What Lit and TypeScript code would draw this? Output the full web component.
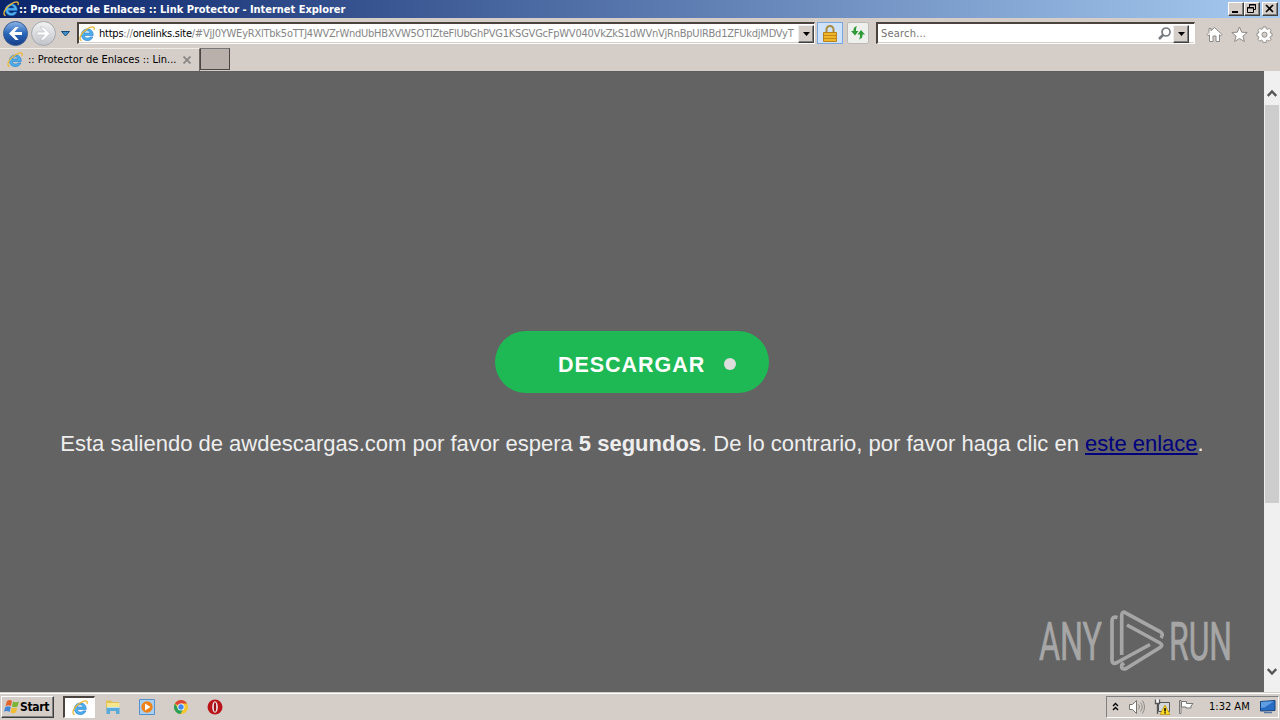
import { LitElement, html, css, svg } from "lit";
import { customElement } from "lit/decorators.js";

const ieLogo = (size: number) => html`<svg width=${size} height=${size} viewBox="0 0 16 16">
  <path d="M14.200 9.400H5.400C5.600 12.400 9.800 12.700 10.900 10.900h3C11.900 16.600 2.300 15.600 2.400 8.600 2.600 1.100 14.700.7 14.200 9.400z M5.400 7h5.600C10.700 4.200 5.900 4.100 5.400 7z" fill="#4fb0ee" fill-rule="evenodd" stroke="#1c73c4" stroke-width=".6"/>
  <path d="M2.600 14.700C-1.400 13.400 2.400 6.500 8 3.100 12.200.5 16.300-.3 15 4" fill="none" stroke="#e9b93a" stroke-width="1.300"/>
</svg>`;

const downArrow = html`<svg width="7" height="4" viewBox="0 0 7 4"><path d="M0 0h7L3.5 4z" fill="#000"/></svg>`;

const backArrow = svg`<path d="M12.5 5.5 6 12l6.500 6.500h3.200L11.500 13.500H19v-3h-7.500l4.200-5z"/>`;

@customElement("app-root")
export class AppRoot extends LitElement {
  static styles = css`
    :host { display: flex; flex-direction: column; width: 1280px; height: 720px; overflow: hidden; background: #d5cec8;
      font: 11px/14px "DejaVu Sans Condensed", "DejaVu Sans", sans-serif; color: #000; }
    * { box-sizing: border-box; }
    svg { display: block; flex: none; }
    span, p, a { white-space: pre; }
    .titlebar { flex: none; height: 18px; display: flex; align-items: center; padding: 0 2px 0 3px; background: linear-gradient(90deg, #0a246a, #a6caf0); color: #fff; }
    .title { flex: 1; font-weight: bold; letter-spacing: -0.03px; padding-top: 1px; }
    .winbtn { width: 16px; height: 14px; background: #d5cec8; border: 1px solid; border-color: #fff #404040 #404040 #fff; box-shadow: inset -1px -1px #808080; }
    .winbtn.close { margin-left: 2px; }
    .nav { flex: none; height: 30px; display: flex; align-items: flex-start; padding-top: 4px; }
    .round { margin-top: -2px; }
    .hist { margin: 9px 7px 0 3px; }
    .field { height: 22px; display: flex; align-items: center; background: #fff; border-top: 2px solid #4b433e; border-left: 2px solid #4b433e; border-bottom: 1px solid #fff; border-right: 1px solid #fff; box-shadow: inset 0 -1px #d5cec8; }
    .address { width: 738px; padding-left: 0; }
    .url { flex: 1; padding-left: 4px; color: #858585; letter-spacing: -0.23px; }
    .url b { font-weight: normal; color: #000; }
    .drop { width: 16px; height: 18px; flex: none; display: flex; align-items: center; justify-content: center; background: #d5cec8; border: 1px solid; border-color: #eee #404040 #404040 #eee; box-shadow: inset -1px -1px #808080; }
    .lock { width: 26px; height: 22px; margin-left: 2px; border: 1px solid #7ba7df; background: #cfe2fb; display: flex; align-items: center; justify-content: center; }
    .refresh { width: 22px; height: 22px; margin: 0 7px 0 4px; border: 1px solid #bdb9b4; border-radius: 2px; background: #edf0ec; display: flex; align-items: center; justify-content: center; }
    .search { width: 319px; padding-right: 5px; }
    .hint { flex: 1; color: #737373; padding-left: 3px; letter-spacing: .2px; }
    .tools { display: flex; gap: 8px; padding: 4px 0 0 11px; }
    .tabs { flex: none; height: 23px; display: flex; }
    .tab { width: 200px; display: flex; align-items: center; padding: 0 8px 0 7px; border-top: 1px solid #efebe7; border-right: 1px solid #6a6560; }
    .tabname { flex: 1; padding-left: 5px; }
    .newtab { width: 30px; height: 22px; background: #b9b0ab; border: 1px solid #4b4643; border-top-color: #777; }
    .page { flex: none; height: 621px; display: flex; }
    .content { width: 1264px; background: #636363; border-top: 1px solid #5d5d5d; display: flex; flex-direction: column; align-items: center; position: relative; }
    .button { margin-top: 259px; width: 274px; height: 62px; border-radius: 31px; background: #1eb955; display: flex; align-items: center; padding: 4px 0 0 63px; color: #fff; font: bold 21.500px/26px "Liberation Sans", Arial, sans-serif; letter-spacing: .95px; }
    .label { padding-top: 1px; }
    .dot { width: 12px; height: 12px; border-radius: 6px; background: #ddd; margin-left: 19px; }
    .notice { margin: 37px 0 0; color: #eee; font: 22px/28px "Liberation Sans", Arial, sans-serif; }
    .notice a { color: #00007f; text-decoration: underline; }
    .watermark { position: absolute; left: 1034px; top: 534px; opacity: .66; overflow: visible; }
    .watermark text { font: 53.500px Roboto, sans-serif; }
    .scroll { width: 16px; background: #f0f0f0; display: flex; flex-direction: column; align-items: center; padding: 18px 0 16px; }
    .thumb { width: 14px; height: 398px; margin: 7px 0 164px; background: #cdcdcd; }
    .taskbar { flex: none; height: 28px; border-top: 1px solid #d5cec8; box-shadow: inset 0 1px #fff; display: flex; align-items: center; padding: 1px 0 0 1px; }
    .start { width: 53px; height: 22px; display: flex; align-items: center; gap: 0; padding-left: 2px; font-weight: bold; font-size: 12px; letter-spacing: -0.3px; border: 1px solid; border-color: #fff #404040 #404040 #fff; box-shadow: inset -1px -1px #808080; }
    .active { width: 32px; height: 22px; margin-left: 9px; background: #fff; border: 1px solid #fff; border-top: 2px solid #4b433e; border-left: 2px solid #4b433e; display: flex; align-items: center; justify-content: center; }
    .apps { flex: 1; display: flex; gap: 18px; padding-left: 10px; }
    .tray { width: 173px; height: 22px; margin-right: 1px; display: flex; align-items: center; border: 1px solid; border-color: #808080 #fff #fff #808080; padding-left: 4px; gap: 8px; }
    .clock { width: 42px; margin: 0 1px 0 7px; letter-spacing: 0; }
  `;

  render() {
    return html`
      <div class="titlebar">
        ${ieLogo(16)}<span class="title">:: Protector de Enlaces :: Link Protector - Internet Explorer</span>
        <div class="winbtn"><svg width="14" height="12"><path d="M3 8h6v2H3z"/></svg></div>
        <div class="winbtn"><svg width="14" height="12" fill="none" stroke="#000"><path d="M4.500 4V1.500h6v5H8.500M4 2h7M2.500 4.500h6v5h-6zM2 5h7"/></svg></div>
        <div class="winbtn close"><svg width="14" height="12"><path d="m3 2 7 7M10 2 3 9" stroke="#000" stroke-width="1.600"/></svg></div>
      </div>
      <div class="nav">
        <svg class="round" width="58" height="28" viewBox="0 0 58 28">
          <defs>
            <linearGradient id="g" x2="0" y2="1"><stop stop-color="#8db5e8"/><stop offset=".5" stop-color="#2867ba"/><stop offset="1" stop-color="#163c86"/></linearGradient>
            <linearGradient id="h" x2="0" y2="1"><stop stop-color="#f3f3f3"/><stop offset="1" stop-color="#c1c4ca"/></linearGradient>
          </defs>
          <circle cx="15.500" cy="13.500" r="12" fill="url(#g)" stroke="#405f92"/>
          <circle cx="43.500" cy="13.500" r="12" fill="url(#h)" stroke="#a6a8ac"/>
          <g fill="#fff" transform="translate(3 1.500)">${backArrow}</g>
          <g fill="#fff" stroke="#b5b9bf" stroke-width=".6" transform="translate(56 1.500) scale(-1 1)">${backArrow}</g>
        </svg>
        <svg class="hist" width="9" height="6" viewBox="0 0 9 6"><path d="M.5.5h8l-4 4.500z" fill="#3f8fc5" stroke="#174a78"/></svg>
        <div class="field address">
          ${ieLogo(16)}<span class="url"><b>https</b>://<b>onelinks.site</b>/#VjJ0YWEyRXlTbk5oTTJ4WVZrWndUbHBXVW5OTlZteFlUbGhPVG1KSGVGcFpWV040VkZkS1dWVnVjRnBpUlRBd1ZFUkdjMDVyT</span>
          <div class="drop">${downArrow}</div>
        </div>
        <div class="lock"><svg width="14" height="17" viewBox="0 0 14 17"><path d="M3.500 8V4.500a3.500 3.500 0 0 1 7 0V8" fill="none" stroke="#a98b3e" stroke-width="2"/><path d="M.5 7.500h13v9H.5z" fill="#efb62c" stroke="#b8821a"/><path d="M1 10.500h12M1 13.500h12" stroke="#c48a17"/></svg></div>
        <div class="refresh"><svg width="14" height="14" viewBox="0 0 14 14" fill="#2e9a38"><path d="M6 0C2.500 1 2.500 3 2.500 5H0l4 4.500L7.500 5H5c0-2 0-3.500 1-5z"/><path d="M8 13.500c3.500-1 3.500-3 3.500-5H14L10 4 6.500 8.500H9c0 2 0 3.500-1 5z"/></svg></div>
        <div class="field search">
          <span class="hint">Search...</span>
          <svg width="16" height="16" viewBox="0 0 16 16" fill="none" stroke="#777981"><circle cx="9" cy="6" r="4" stroke-width="1.700"/><path d="m6 9-4 4" stroke-width="2.500"/></svg>
          <div class="drop">${downArrow}</div>
        </div>
        <div class="tools">
          <svg width="17" height="17" viewBox="0 0 17 17"><path d="m8.500 1.500 7.500 7-1.200 1.300-1.300-1V15.500h-3.500V10h-3v5.500H3.500V8.800l-1.300 1L1 8.500l2-2V2.500h2v2.300z" fill="#fff" stroke="#8d8986"/></svg>
          <svg width="17" height="17" viewBox="0 0 17 17"><path d="m8.500 1 2.200 5.200 5.500.3-4.300 3.600 1.500 5.400-4.900-3-4.900 3 1.500-5.400L.8 6.500l5.500-.3z" fill="#fff" stroke="#8d8986"/></svg>
          <svg width="17" height="17" viewBox="0 0 17 18"><path d="M7 1h3l.4 2 1.300.6 1.800-1.100 2 2-1.100 1.800.6 1.200 1.500.5v2.500l-1.500.5-.6 1.300 1.100 1.800-2 2-1.800-1.100-1.300.6-.4 2H7l-.5-2-1.200-.6-1.800 1.100-2-2 1.100-1.800-.6-1.300-1.500-.5V8l1.500-.5.6-1.200-1.100-1.800 2-2 1.800 1.100L6.500 3z" fill="#fff" stroke="#8d8986"/><circle cx="8.500" cy="9.200" r="2.700" fill="#d5cec8" stroke="#8d8986"/></svg>
        </div>
      </div>
      <div class="tabs">
        <div class="tab">${ieLogo(16)}<span class="tabname">:: Protector de Enlaces :: Lin...</span>
          <svg width="8" height="8"><path d="m.5.5 7 7m0-7-7 7" stroke="#8a8683" stroke-width="1.800"/></svg></div>
        <div class="newtab"></div>
      </div>
      <div class="page">
        <div class="content">
          <div class="button"><span class="label">DESCARGAR</span><i class="dot"></i></div>
          <p class="notice">Esta saliendo de awdescargas.com por favor espera <b>5 segundos</b>. De lo contrario, por favor haga clic en <a>este enlace</a>.</p>
          <svg class="watermark" width="204" height="72" viewBox="1034 606 204 72">
            <g fill="#c9c9c9" stroke="#c9c9c9" stroke-width=".7">
              <text x="1039" y="660" textLength="63" lengthAdjust="spacingAndGlyphs">ANY</text>
              <text x="1169" y="660" textLength="63" lengthAdjust="spacingAndGlyphs">RUN</text>
            </g>
            <g fill="none" stroke="#c9c9c9" stroke-width="3.700" stroke-linejoin="round">
              <path d="M1117.500 617.500Q1112 616 1112 621V660Q1112 665 1117 662.500L1150 644.500"/>
              <path d="M1121.700 655V616Q1121.700 610.500 1126 613L1160 631.500Q1164 634 1161 638"/>
              <path d="M1127 625 1160 643Q1163.500 645 1160 647.500L1127 668Q1121 671 1121.700 665L1124 663"/>
            </g>
          </svg>
        </div>
        <div class="scroll">
          <svg width="10" height="9" viewBox="0 0 10 9"><path d="m.7 7 4.300-4.500L9.300 7" fill="none" stroke="#555" stroke-width="2.400"/></svg>
          <div class="thumb"></div>
          <svg width="10" height="9" viewBox="0 0 10 9"><path d="m.7 2 4.300 4.500L9.300 2" fill="none" stroke="#555" stroke-width="2.400"/></svg>
        </div>
      </div>
      <div class="taskbar">
        <div class="start"><svg width="16" height="16" viewBox="0 0 16 16"><path d="M3 2q3-2 5 0L7 7Q4.500 5.500 1.500 7z" fill="#e4632c"/><path d="M9 2.500q3 1.500 6 0L13.500 7.500q-3 1.500-5.500 0z" fill="#7ab538"/><path d="M1.300 8q3-1.700 5.500 0l-1.200 5q-2.500-1.800-5.500-.5z" fill="#4286d5"/><path d="M7.700 8.500q3 1.500 5.500 0L12 13.500q-3 1.500-5.500 0z" fill="#efbd35"/></svg>Start</div>
        <div class="active">${ieLogo(16)}</div>
        <div class="apps">
          <svg width="16" height="16" viewBox="0 0 16 16"><path d="M1 3V1.500h5L7.500 3H14v8H1z" fill="#e0c258"/><path d="M2 4h12.500v5H2z" fill="#f5e58c"/><path d="M1.500 15V8.500h13V15H11v-3H5v3z" fill="#58aadb"/><path d="M2 8.500h12" stroke="#b8e3f5"/></svg>
          <svg width="16" height="16" viewBox="0 0 16 16"><path d="M.5.500h15v15H.5z" fill="#a9d0f3" stroke="#5791cb"/><circle cx="8" cy="8" r="5.700" fill="#ef8219"/><path d="m6 4.500 5.500 3.500L6 11.500z" fill="#fff"/></svg>
          <svg width="16" height="16" viewBox="0 0 16 16"><circle cx="8" cy="8" r="7" fill="#f4c52c"/><path d="M8 8 1.900 4.500A7 7 0 0 1 14.100 4.500H8z" fill="#dc4437"/><path d="M1.900 4.500A7 7 0 0 0 7.500 15L10.500 9.500 5 9.500z" fill="#2b9f59"/><circle cx="8" cy="8" r="3.500" fill="#fff"/><circle cx="8" cy="8" r="2.700" fill="#4487ee"/></svg>
          <svg width="16" height="16" viewBox="0 0 16 16"><circle cx="8" cy="8" r="7.500" fill="#b91419"/><ellipse cx="8" cy="8" rx="2.800" ry="5.800" fill="#f3eded"/><ellipse cx="8" cy="8" rx="1.200" ry="4.800" fill="#9c1115"/></svg>
        </div>
        <div class="tray">
          <svg width="9" height="12" viewBox="0 0 9 12" fill="none" stroke="#000" stroke-width="1.400"><path d="m2 5 2.500-2.500L7 5M2 9l2.500-2.500L7 9"/></svg>
          <svg width="18" height="16" viewBox="0 0 18 16" fill="#fff" stroke="#77736f"><path d="M1.500 5.500h3l4-4v13l-4-4h-3z"/><path d="M10.500 5.500q2 2.500 0 5M12.500 3.500q3.500 4.500 0 9M14.500 1.500q4 6.500 0 13" fill="none" stroke="#8f8b88"/></svg>
          <svg width="16" height="16" viewBox="0 0 16 16"><path d="M4.500 3.500h11v9h-11z" fill="#d4d8dc" stroke="#555"/><path d="M1.500.5v4h4v-4M3.500 5v10" fill="#fff" stroke="#555" stroke-width="1.300"/><path d="m11 6 5 9.500H6z" fill="#ffdc20" stroke="#b58b0d" stroke-width=".7"/><path d="M10.300 9h1.500v3.500h-1.500zM10.300 13.300h1.500v1.200h-1.500z"/></svg>
          <svg width="16" height="16" viewBox="0 0 16 16"><path d="M1.500 1.500h1.500v13H1.500z" fill="#fff" stroke="#777"/><path d="M3.500 2.500h5v2h6.500l-2 2.500 0 2H8V8H3.500z" fill="#fff" stroke="#777"/></svg>
          <span class="clock">1:32 AM</span>
          <svg width="16" height="14" viewBox="0 0 16 14"><path d="M.5 1.500 15 .5v10L.5 11z" fill="#286dc4" stroke="#164580"/><path d="m1 2 13-.8-9 6L1 8z" fill="#5f9ee3"/><path d="M4 12.500h8" stroke="#5779a3" stroke-width="1.500"/></svg>
        </div>
      </div>`;
  }
}
